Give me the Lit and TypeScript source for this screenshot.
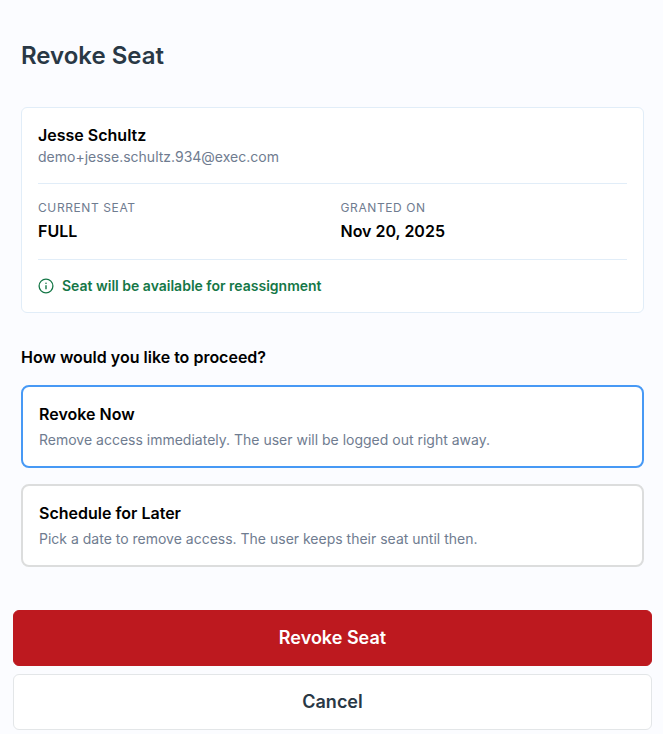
import { LitElement, html, css } from "lit";
import { customElement, state } from "lit/decorators.js";

interface Choice {
  value: string;
  title: string;
  text: string;
}

const choices: Choice[] = [
  {
    value: "now",
    title: "Revoke Now",
    text: "Remove access immediately. The user will be logged out right away.",
  },
  {
    value: "later",
    title: "Schedule for Later",
    text: "Pick a date to remove access. The user keeps their seat until then.",
  },
];

@customElement("app-root")
export class AppRoot extends LitElement {
  static styles = css`
    :host {
      display: block;
      box-sizing: border-box;
      min-height: 100vh;
      padding: 40px 11px 4px 13px;
      background: #fbfcff;
      color: #000;
      font-family: Inter, "Liberation Sans", sans-serif;
      font-size: 16px;
      line-height: 22px;
    }
    * {
      box-sizing: border-box;
      margin: 0;
    }
    .content {
      padding: 0 8px;
    }
    .heading {
      color: #293845;
      font-size: 24px;
      line-height: 32px;
      font-weight: 600;
    }
    .card {
      margin-top: 35px;
      padding: 16px;
      border: 1px solid #e1edf8;
      border-radius: 6px;
      background: #fff;
    }
    .person,
    .facts {
      padding-bottom: 16px;
      border-bottom: 1px solid #e1edf8;
    }
    .facts,
    .notice {
      padding-top: 16px;
    }
    .name,
    .title,
    .value {
      font-weight: 600;
    }
    .muted {
      color: #6f7c90;
      font-size: 14px;
      line-height: 21px;
    }
    .facts {
      display: grid;
      grid-template-columns: 1fr 1fr;
      column-gap: 16px;
    }
    .label {
      color: #6f7c90;
      font-size: 12px;
      line-height: 16px;
      letter-spacing: 0.05em;
      text-transform: uppercase;
    }
    .value {
      margin-top: 4px;
      line-height: 23px;
    }
    .notice {
      display: flex;
      align-items: center;
      gap: 8px;
      color: #157747;
      font-size: 14px;
      line-height: 20px;
      font-weight: 600;
    }
    .info {
      width: 16px;
      height: 16px;
      flex: none;
    }
    .options {
      display: grid;
      gap: 16px;
      min-width: 0;
      margin-top: 33px;
      padding: 0;
      border: 0;
    }
    .question {
      padding: 0 0 17px;
      font-weight: 600;
    }
    .option {
      display: grid;
      gap: 4px;
      position: relative;
      padding: 16px;
      border: 2px solid #dcdddd;
      border-radius: 8px;
      background: #fff;
      cursor: pointer;
    }
    .option:has(.radio:checked) {
      border-color: #4799f5;
    }
    .option:has(.radio:focus-visible) {
      outline: 2px solid #a9d0fb;
    }
    .radio {
      position: absolute;
      inset: 0;
      width: 100%;
      height: 100%;
      opacity: 0;
      cursor: pointer;
    }
    .actions {
      display: grid;
      gap: 8px;
      margin-top: 43px;
    }
    .button {
      height: 56px;
      border: 1px solid #e3e6e8;
      border-radius: 6px;
      background: #fff;
      color: #293845;
      font: inherit;
      font-size: 18px;
      font-weight: 600;
      cursor: pointer;
    }
    .danger {
      border-color: #bd191f;
      background: #bd191f;
      color: #fff;
    }
  `;

  @state() private selected = "now";

  render() {
    return html`
      <div class="content">
        <h1 class="heading">Revoke Seat</h1>
        <section class="card">
          <div class="person">
            <p class="name">Jesse Schultz</p>
            <p class="muted">demo+jesse.schultz.934@exec.com</p>
          </div>
          <dl class="facts">
            <div>
              <dt class="label">Current seat</dt>
              <dd class="value">FULL</dd>
            </div>
            <div>
              <dt class="label">Granted on</dt>
              <dd class="value">Nov 20, 2025</dd>
            </div>
          </dl>
          <p class="notice">
            <svg class="info" viewBox="0 0 16 16" fill="none" stroke="currentColor" aria-hidden="true">
              <circle cx="8" cy="8" r="6.9" stroke-width="1.3" />
              <path d="M8 7.2v4" stroke-width="1.4" />
              <circle cx="8" cy="5.2" r="0.8" fill="currentColor" stroke="none" />
            </svg>
            Seat will be available for reassignment
          </p>
        </section>
        <fieldset class="options">
          <legend class="question">How would you like to proceed?</legend>
          ${choices.map(
            (c) => html`
              <label class="option">
                <input
                  class="radio"
                  type="radio"
                  name="timing"
                  .value=${c.value}
                  .checked=${this.selected === c.value}
                  @change=${() => (this.selected = c.value)}
                />
                <span class="title">${c.title}</span>
                <span class="muted">${c.text}</span>
              </label>
            `
          )}
        </fieldset>
      </div>
      <div class="actions">
        <button class="button danger" type="button">Revoke Seat</button>
        <button class="button" type="button">Cancel</button>
      </div>
    `;
  }
}
